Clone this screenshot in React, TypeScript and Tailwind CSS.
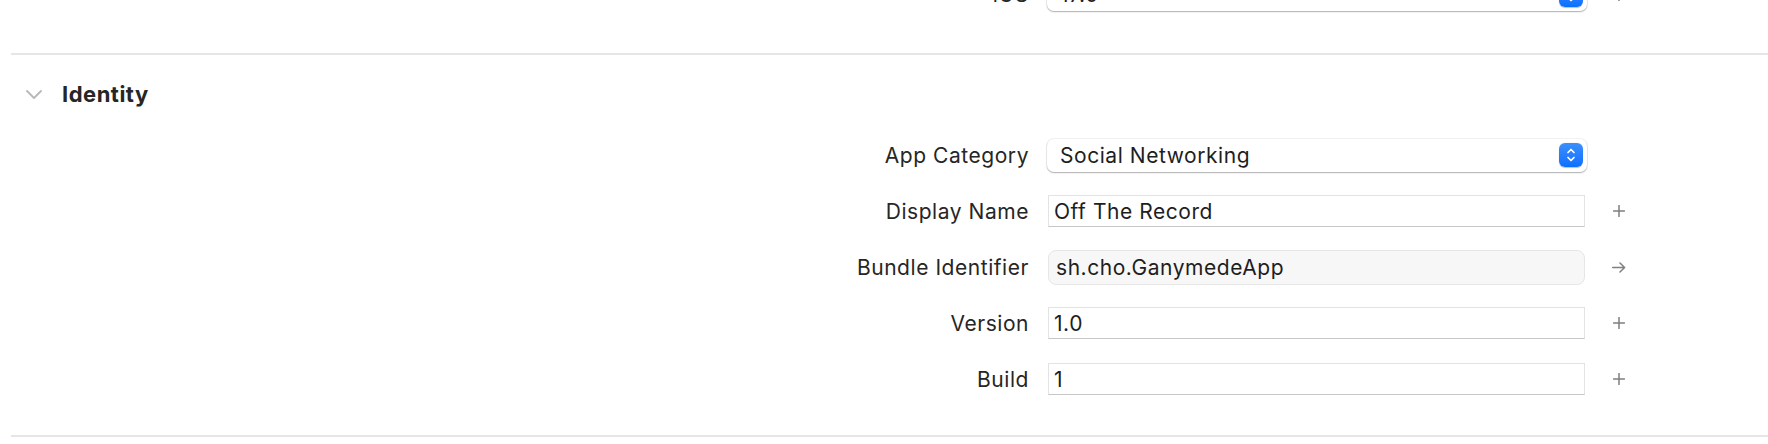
import React from "react";

function PlusIcon() {
  return (
    <svg width="12" height="12" viewBox="0 0 12 12" fill="none">
      <path d="M6 0.5V11.5M0.5 6H11.5" stroke="#7f7f7f" strokeWidth="1.5" strokeLinecap="round" />
    </svg>
  );
}

function ArrowIcon() {
  return (
    <svg width="14" height="11" viewBox="0 0 14 11" fill="none">
      <path d="M0.75 5.5H12.5M8 1L12.6 5.5L8 10" stroke="#7f7f7f" strokeWidth="1.5" strokeLinecap="round" strokeLinejoin="round" />
    </svg>
  );
}

function Stepper() {
  return (
    <div className="flex h-[24px] w-[24px] items-center justify-center rounded-[6px] bg-gradient-to-b from-[#3b8ffc] to-[#0a6fff] shadow-[0_0.5px_1px_rgba(0,0,0,0.25)]">
      <svg width="10" height="16" viewBox="0 0 10 16" fill="none">
        <path d="M2 5.5L5 2.5L8 5.5M2 10.5L5 13.5L8 10.5" stroke="white" strokeWidth="1.7" strokeLinecap="round" strokeLinejoin="round" />
      </svg>
    </div>
  );
}

const TEXT = "text-[21px] tracking-[0.55px] leading-none";

function Popup({ value }: { value: string }) {
  return (
    <div className="-mx-[1px] flex h-[33px] w-[540px] items-center rounded-[7px] bg-white pl-[13px] pr-[4px] shadow-[0_0_0_1px_rgba(0,0,0,0.05),0_1px_1.5px_rgba(0,0,0,0.28)]">
      <span className="flex-1 text-[21px] leading-none tracking-[0.55px] text-[#1e1e1e]">{value}</span>
      <Stepper />
    </div>
  );
}

function Field({ value }: { value: string }) {
  return (
    <div className="flex h-[32px] w-[537px] items-center border border-[#e3e3e3] border-b-[#c6c6c6] bg-white px-[5px] text-[21px] leading-none tracking-[0.55px] text-[#1e1e1e]">
      {value}
    </div>
  );
}

function ReadOnlyField({ value }: { value: string }) {
  return (
    <div className="flex h-[35px] w-[537px] items-center rounded-[8px] border border-[#e6e6e6] bg-[#f7f7f7] px-[7px] text-[21px] leading-none tracking-[0.55px] text-[#1e1e1e]">
      {value}
    </div>
  );
}

function Row({
  label,
  children,
  trailing,
}: {
  label: string;
  children: React.ReactNode;
  trailing?: React.ReactNode;
}) {
  return (
    <div className="flex h-[56px] items-center">
      <div className="w-[1029px] text-right text-[21px] leading-none tracking-[0.55px] text-[#262626]">{label}</div>
      <div className="ml-[19px] w-[537px]">{children}</div>
      <div className="ml-[27px] flex w-[14px] justify-center">{trailing}</div>
    </div>
  );
}

export default function App() {
  void TEXT;
  return (
    <div className="relative h-[444px] w-[1768px] overflow-hidden bg-white [font-family:Inter,'Noto_Sans',sans-serif]">
      <div className="-mt-[22px] flex h-[33px] items-center">
        <div className="w-[1029px] text-right text-[21px] leading-none tracking-[0.55px] text-[#262626]">iOS</div>
        <div className="ml-[19px] w-[537px]">
          <Popup value="17.0" />
        </div>
        <div className="ml-[27px] flex w-[14px] justify-center">
          <PlusIcon />
        </div>
      </div>

      <div className="ml-[11px] mt-[42px] h-[2px] bg-[#e6e6e6]" />

      <div className="mt-[26px] flex h-[26px] items-center">
        <div className="ml-[26px] flex w-[16px] items-center">
          <svg width="16" height="9" viewBox="0 0 16 9" fill="none">
            <path d="M1 1L8 8L15 1" stroke="#b8b8b8" strokeWidth="1.8" strokeLinecap="round" strokeLinejoin="round" />
          </svg>
        </div>
        <span className="ml-[20px] text-[22px] font-bold leading-none tracking-[0.5px] text-[#262626]">Identity</span>
      </div>

      <div className="mt-[20px]">
        <Row label="App Category">
          <Popup value="Social Networking" />
        </Row>
        <Row label="Display Name" trailing={<PlusIcon />}>
          <Field value="Off The Record" />
        </Row>
        <Row label="Bundle Identifier" trailing={<ArrowIcon />}>
          <ReadOnlyField value="sh.cho.GanymedeApp" />
        </Row>
        <Row label="Version" trailing={<PlusIcon />}>
          <Field value="1.0" />
        </Row>
        <Row label="Build" trailing={<PlusIcon />}>
          <Field value="1" />
        </Row>
      </div>

      <div className="ml-[11px] mt-[28px] h-[2px] bg-[#e6e6e6]" />
    </div>
  );
}
